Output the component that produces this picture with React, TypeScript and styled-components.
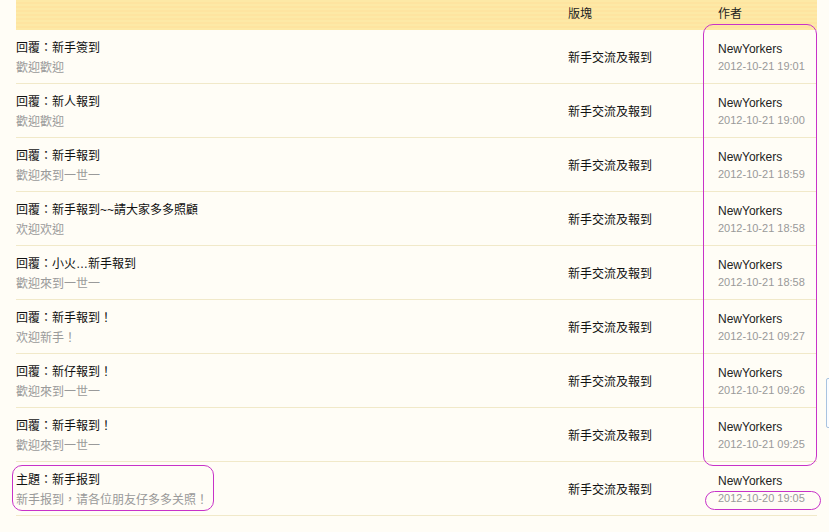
import styled, { createGlobalStyle } from "styled-components";

const GlobalStyle = createGlobalStyle`
    html, body {
        margin: 0;
        padding: 0;
        background: #fffdf6;
        font-family: "Liberation Sans", "Noto Sans CJK TC", sans-serif;
        font-size: 12px;
        color: #222;
        overflow: hidden;
    }
`;

const Page = styled.div`
    position: relative;
    width: 829px;
    height: 532px;
    padding-left: 16px;
    box-sizing: border-box;
`;

const Table = styled.div`
    width: 801px;
`;

const Grid = styled.div`
    display: grid;
    grid-template-columns: 552px 150px 99px;
`;

const Header = styled(Grid)`
    height: 30px;
    align-items: center;
    background: repeating-linear-gradient(
        to bottom,
        #fde9a6 0px,
        #fde9a6 2px,
        #fee4a0 2px,
        #fee4a0 4px
    );
    span {
        padding-bottom: 6px;
    }
`;

const Row = styled(Grid)`
    height: 53px;
    border-bottom: 1px solid #f1e9c9;
    align-items: center;
`;

const TitleCell = styled.div`
    display: flex;
    flex-direction: column;
    gap: 6px;
    padding-top: 2px;
`;

const Title = styled.span`
    color: #111;
    font-size: 12px;
    line-height: 14px;
`;

const Sub = styled.span`
    color: #9a9a9a;
    font-size: 12px;
    line-height: 14px;
`;

const Board = styled.div`
    color: #111;
`;

const AuthorCell = styled.div`
    display: flex;
    flex-direction: column;
    gap: 4px;
    padding-top: 2px;
`;

const Author = styled.span`
    color: #222;
    font-size: 12px;
    line-height: 14px;
`;

const Date = styled.span`
    color: #999;
    font-size: 11px;
    line-height: 13px;
`;

const Mark = styled.div<{ x: number; y: number; w: number; h: number; r: number }>`
    position: absolute;
    left: ${(p) => p.x}px;
    top: ${(p) => p.y}px;
    width: ${(p) => p.w}px;
    height: ${(p) => p.h}px;
    border: 1.5px solid #c832c8;
    border-radius: ${(p) => p.r}px;
    box-sizing: border-box;
    pointer-events: none;
`;

const SideBox = styled.div`
    position: absolute;
    left: 826px;
    top: 378px;
    width: 10px;
    height: 48px;
    border: 1px solid #a9c3e0;
    border-radius: 2px;
    background: #fbfdff;
`;

const rows = [
    { t: "回覆：新手簽到", s: "歡迎歡迎", d: "2012-10-21 19:01" },
    { t: "回覆：新人報到", s: "歡迎歡迎", d: "2012-10-21 19:00" },
    { t: "回覆：新手報到", s: "歡迎來到一世一", d: "2012-10-21 18:59" },
    { t: "回覆：新手報到~~請大家多多照顧", s: "欢迎欢迎", d: "2012-10-21 18:58" },
    { t: "回覆：小火…新手報到", s: "歡迎來到一世一", d: "2012-10-21 18:58" },
    { t: "回覆：新手報到！", s: "欢迎新手！", d: "2012-10-21 09:27" },
    { t: "回覆：新仔報到！", s: "歡迎來到一世一", d: "2012-10-21 09:26" },
    { t: "回覆：新手報到！", s: "歡迎來到一世一", d: "2012-10-21 09:25" },
    { t: "主題：新手报到", s: "新手报到，请各位朋友仔多多关照！", d: "2012-10-20 19:05" },
];

function App() {
    return (
        <>
            <GlobalStyle />
            <Page>
                <Table>
                    <Header>
                        <span></span>
                        <span>版塊</span>
                        <span>作者</span>
                    </Header>
                    {rows.map((r, i) => (
                        <Row key={i}>
                            <TitleCell>
                                <Title>{r.t}</Title>
                                <Sub>{r.s}</Sub>
                            </TitleCell>
                            <Board>新手交流及報到</Board>
                            <AuthorCell>
                                <Author>NewYorkers</Author>
                                <Date>{r.d}</Date>
                            </AuthorCell>
                        </Row>
                    ))}
                </Table>
                <Mark x={703} y={24} w={114} h={442} r={10} />
                <Mark x={705} y={491} w={116} h={19} r={10} />
                <Mark x={12} y={465} w={202} h={46} r={10} />
                <SideBox />
            </Page>
        </>
    );
}

export default App;
